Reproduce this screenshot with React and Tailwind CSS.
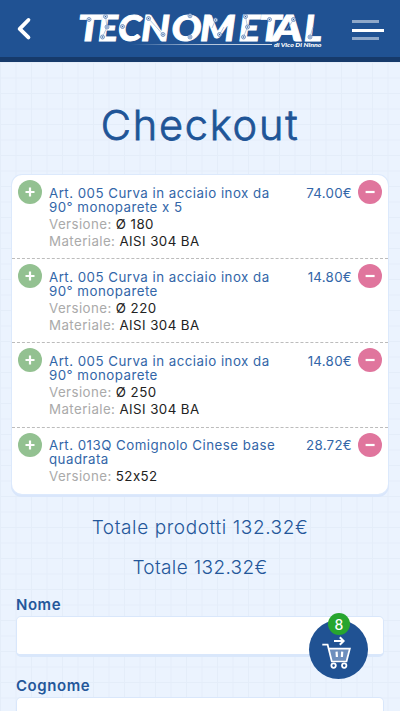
import React from "react";

const items = [
  { name: ["Art. 005 Curva in acciaio inox da", "90° monoparete x 5"], version: "Ø 180", material: "AISI 304 BA", price: "74.00€" },
  { name: ["Art. 005 Curva in acciaio inox da", "90° monoparete"], version: "Ø 220", material: "AISI 304 BA", price: "14.80€" },
  { name: ["Art. 005 Curva in acciaio inox da", "90° monoparete"], version: "Ø 250", material: "AISI 304 BA", price: "14.80€" },
  { name: ["Art. 013Q Comignolo Cinese base", "quadrata"], version: "52x52", price: "28.72€" },
];

// letter, left edge, width
const letters = [
  ["T", 78, 22.5], ["E", 98, 20], ["C", 118, 23.5], ["N", 141, 29], ["O", 171.5, 30],
  ["M", 200, 35.5], ["E", 238.5, 21.5], ["T", 259, 22.5], ["A", 272.5, 30], ["L", 304, 18],
];

const nodes = [
  [89, 19.5], [105.5, 16.5], [107, 27], [102.5, 37], [122.5, 26.5], [148.5, 18.5], [163, 34.5],
  [190, 15.8], [190, 37], [215.5, 20], [219.5, 34.5], [245.5, 16.5], [247.5, 27], [243.5, 37],
  [269.5, 19.5], [293.5, 19.5], [310, 37],
];

const traces = "M105.5 16.5L107 27L102.5 37M148.5 18.5L163 34.5M215.5 20L212 28M219.5 34.5L224 27M245.5 16.5L247.5 27L243.5 37M293.5 19.5L286 31M310 37L313 27";

function Logo() {
  return (
    <svg className="block" width="250" height="44" viewBox="76 8 250 44">
      <defs>
        <linearGradient id="rule" x1="0" x2="1">
          <stop offset="0" stopColor="#fff" stopOpacity="0" />
          <stop offset="0.5" stopColor="#fff" stopOpacity="0.8" />
          <stop offset="1" stopColor="#fff" />
        </linearGradient>
      </defs>
      <g fill="#fff" stroke="#fff" strokeWidth="0.9" fontFamily="Lato, 'Liberation Sans', sans-serif" fontSize="36" fontWeight="900" fontStyle="italic">
        {letters.map(([letter, x, width]) => (
          <text key={x} x={x} y="40.5" textLength={width} lengthAdjust="spacingAndGlyphs">{letter}</text>
        ))}
      </g>
      <path d={traces} fill="none" stroke="#8aa6cc" strokeWidth="0.6" />
      {nodes.map(([x, y]) => (
        <g key={x + "-" + y}>
          <circle cx={x} cy={y} r="2" fill="#d5e0ef" stroke="#6487b9" strokeWidth="0.8" />
          <circle cx={x} cy={y} r="0.7" fill="#3565a3" />
        </g>
      ))}
      <rect x="130" y="44" width="142" height="0.8" fill="url(#rule)" />
      <text x="274" y="46.6" fill="#fff" fontFamily="Lato, sans-serif" fontSize="6.4" fontWeight="900" fontStyle="italic" textLength="47.5" lengthAdjust="spacingAndGlyphs">
        di Vico Di Ninno
      </text>
    </svg>
  );
}

function RoundButton({ minus }) {
  return (
    <button className={"flex size-6 shrink-0 items-center justify-center rounded-full " + (minus ? "bg-[#e0759d]" : "bg-[#93c191]")}>
      <svg width="24" height="24" viewBox="0 0 24 24" stroke="#fff" strokeWidth="2.2" fill="none">
        <path d={minus ? "M7.6 12H16.6" : "M7.5 12H16.5M12 7.5V16.5"} />
      </svg>
    </button>
  );
}

function Item({ item, last }) {
  return (
    <li className={"flex px-1.5 pt-[5px] " + (last ? "h-[66px]" : "h-[84.2px] border-b border-dashed border-[#bcbcbc]")}>
      <RoundButton />
      <div className="ml-[7px] flex-1 whitespace-nowrap pt-[5.5px] text-[13.3px] leading-[17px]">
        <div className="leading-[14px] tracking-[0.48px] text-[#3366a8]">
          {item.name.map((line) => <div key={line}>{line}</div>)}
        </div>
        <div className="mt-[2px] tracking-[0.42px] text-[#aaa]">Versione: <span className="text-[#222]">{item.version}</span></div>
        {item.material && (
          <div className="tracking-[0.42px] text-[#aaa]">Materiale: <span className="text-[#222]">{item.material}</span></div>
        )}
      </div>
      <div className="mr-[6px] pt-[5.5px] text-[13.3px] leading-[14px] tracking-[0.3px] text-[#3366a8]">{item.price}</div>
      <RoundButton minus />
    </li>
  );
}

function Field({ label }) {
  return (
    <label className="block h-[81px]">
      <span className="block h-[20px] text-[15px] font-semibold leading-[18px] tracking-[0.55px] text-[#24579a]">{label}</span>
      <input className="block h-[41px] w-full rounded-[5px] border border-b-[3px] border-[#d9e7fb] bg-white outline-none" />
    </label>
  );
}

function CartIcon() {
  return (
    <svg width="59" height="59" viewBox="309 621 59 59" fill="none" stroke="#fff" strokeWidth="1.8">
      <path d="M334 642H343.4M339.8 638.2L343.6 642L339.8 645.8" strokeWidth="2" />
      <path d="M329 650H349L346.5 661H331.5Z" fill="#6e8fbd" stroke="none" />
      <path d="M322.3 645.6H327.6L331.8 662.4H346.5L349.8 649.6H329" />
      <path d="M336.6 652.6L336.9 658M342.2 652.6L341.9 658" strokeWidth="2.2" />
      <circle cx="333.6" cy="666.6" r="2.2" />
      <circle cx="344.2" cy="666.6" r="2.2" />
    </svg>
  );
}

export default function App() {
  return (
    <div className="relative flex h-[711px] w-[400px] flex-col overflow-hidden bg-[#ebf3fe] bg-[linear-gradient(to_right,#e4edf9_1px,transparent_1px),linear-gradient(to_bottom,#e4edf9_1px,transparent_1px)] bg-[size:15.5px_15.5px] font-['Inter','Liberation_Sans',sans-serif]">
      <header className="flex h-[62px] shrink-0 items-start border-b-[5px] border-[#163a6b] bg-[#205293]">
        <button className="ml-4 mt-[17px]">
          <svg width="16" height="24" viewBox="0 0 16 24" fill="none" stroke="#fff" strokeWidth="3.9" strokeLinecap="round" strokeLinejoin="round">
            <path d="M12.4 3L3.7 11.8L12.4 20.4" />
          </svg>
        </button>
        <div className="ml-[44px] mt-2"><Logo /></div>
        <button className="ml-auto mr-4 mt-5 flex w-8 flex-col gap-[5.5px]">
          <span className="h-[3px] w-[27px] bg-[#8fa8c9]" />
          <span className="h-[3px] w-8 bg-white" />
          <span className="h-[3px] w-[27px] bg-[#8fa8c9]" />
        </button>
      </header>
      <main className="flex flex-1 flex-col">
        <h1 className="mt-[35px] text-center text-[41.5px] font-light leading-[56px] tracking-[1.8px] text-[#1f5597] [-webkit-text-stroke:0.8px_#1f5597]">Checkout</h1>
        <ul className="mx-3 mt-[22px] h-[319px] shrink-0 rounded-[10px] bg-white shadow-[0_0_0_1px_#dce9fc,0_2px_0_1px_#d9e6fb]">
          {items.map((item, i) => <Item key={i} item={item} last={i === 3} />)}
        </ul>
        <p className="mt-[21px] text-center text-[19px] font-light leading-[26px] tracking-[0.6px] text-[#24579a]">Totale prodotti 132.32€</p>
        <p className="mt-[14px] text-center text-[19px] font-light leading-[26px] tracking-[0.35px] text-[#24579a]">Totale 132.32€</p>
        <form className="mx-4 mt-[15px]">
          <Field label="Nome" />
          <Field label="Cognome" />
        </form>
      </main>
      <button className="absolute left-[309px] top-[620px] size-[59px] rounded-full bg-[#205293]">
        <CartIcon />
        <span className="absolute -top-[7px] left-[19px] flex size-[22px] items-center justify-center rounded-full bg-[#27a52f] text-[14px] font-medium text-white">8</span>
      </button>
    </div>
  );
}
